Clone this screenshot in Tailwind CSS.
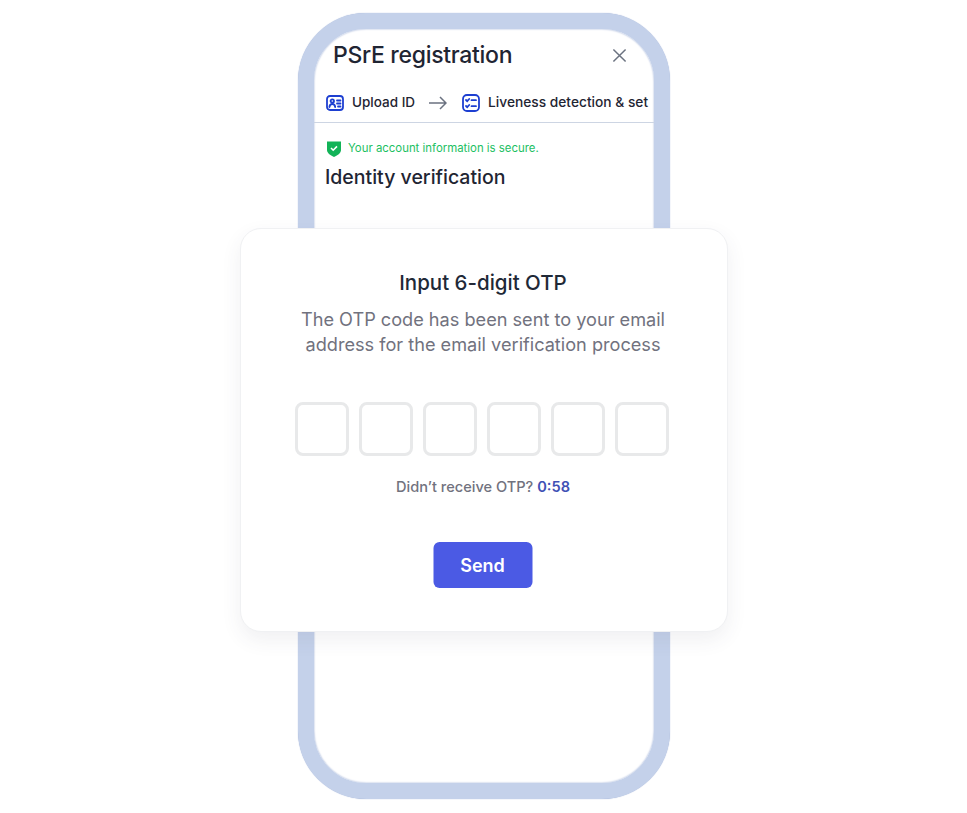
<!DOCTYPE html>
<html lang="en">
<head>
    <meta charset="UTF-8">
    <meta name="viewport" content="width=device-width, initial-scale=1.0">
    <title>Input OTP</title>
    <script src="https://cdn.jsdelivr.net/npm/@tailwindcss/browser@4"></script>
</head>
<body class="bg-white font-['Inter',sans-serif] overflow-hidden">
    <div class="relative w-[967px] h-[813px] pt-[13px]">
        <!-- phone frame -->
        <div class="ml-[298px] w-[372px] h-[786px] box-border border-[16px] border-[#c4d1ea] rounded-[68px] bg-white overflow-hidden shadow-[0_0_1px_#93a6d0,inset_0_0_2px_#93a6d0]">
            <div class="flex items-center justify-between pl-[19px] pr-[27px] pt-[8px] h-[44px]">
                <h2 class="text-[23px] leading-[34px] font-medium tracking-[-0.3px] text-[#1f2533]">PSrE registration</h2>
                <svg width="15" height="15" viewBox="0 0 16 16" fill="none" stroke="#6b7280" stroke-width="1.6"><path d="M1.5 1.5l13 13M14.5 1.5l-13 13"/></svg>
            </div>
            <div class="flex items-center h-[50px] pt-[10px] pl-[12px] border-b border-[#cdd5e3] whitespace-nowrap overflow-hidden">
                <svg class="shrink-0" width="18" height="18" viewBox="0 0 18 18" fill="none" stroke="#1d3fd1" stroke-width="1.8"><rect x="1" y="2" width="16" height="14" rx="3"/><circle cx="6.3" cy="7" r="1.7"/><path d="M3.4 13c.3-2 1.4-3 2.9-3s2.6 1 2.9 3M11 6.5h3.5M11 9.5h3.5M12 12.5h2.5" stroke-linecap="round"/></svg>
                <span class="ml-[8px] w-[62px] text-[13.5px] font-medium text-[#1f2533]">Upload ID</span>
                <svg class="shrink-0 ml-[15px]" width="18" height="14" viewBox="0 0 18 14" fill="none" stroke="#6b7280" stroke-width="1.5"><path d="M0 7h17M11 1l6 6-6 6"/></svg>
                <svg class="shrink-0 ml-[15px]" width="18" height="18" viewBox="0 0 18 18" fill="none" stroke="#1d3fd1" stroke-width="1.8" stroke-linecap="round"><rect x="1" y="1" width="16" height="16" rx="4"/><path d="M4 6l1.2 1.2L7.2 5M4 12l1.2 1.2L7.2 11M9.5 6.2h4.5M9.5 12.2h4.5"/></svg>
                <span class="ml-[8px] text-[13.75px] font-medium text-[#1f2533]">Liveness detection &amp; set</span>
            </div>
            <div class="flex items-center h-[17px] mt-[17px] pl-[13px]">
                <svg width="14" height="17" viewBox="0 0 14 17"><path d="M0 1.5h14v8.5c0 3-3 5-7 7-4-2-7-4-7-7z" fill="#12b358"/><path d="M4 8l2.2 2.2L10 6.4" fill="none" stroke="#fff" stroke-width="1.6"/></svg>
                <span class="ml-[7px] text-[11.4px] text-[#1cc062]">Your account information is secure.</span>
            </div>
            <h3 class="pl-[11px] mt-[5px] text-[19.5px] leading-[30px] font-medium text-[#1f2533]">Identity verification</h3>
        </div>
        <!-- otp dialog over the phone -->
        <div class="absolute left-[240px] top-[228px] w-[488px] h-[404px] pr-[2px] bg-white rounded-[21px] border border-[#f0f1f3] shadow-[0_8px_20px_rgba(60,70,90,0.08)] flex flex-col items-center">
            <h1 class="mt-[39px] text-[20.5px] leading-[30px] font-medium text-[#1f2937]">Input 6-digit OTP</h1>
            <p class="mt-[9px] text-[18.15px] leading-[25px] text-center text-[#71727e]">The OTP code has been sent to your email<br>address for the email verification process</p>
            <div class="flex gap-[10px] mt-[45px] -translate-x-[1px]">
                <div class="w-[54px] h-[54px] border-[3px] border-[#e8e9ea] rounded-[8px]"></div>
                <div class="w-[54px] h-[54px] border-[3px] border-[#e8e9ea] rounded-[8px]"></div>
                <div class="w-[54px] h-[54px] border-[3px] border-[#e8e9ea] rounded-[8px]"></div>
                <div class="w-[54px] h-[54px] border-[3px] border-[#e8e9ea] rounded-[8px]"></div>
                <div class="w-[54px] h-[54px] border-[3px] border-[#e8e9ea] rounded-[8px]"></div>
                <div class="w-[54px] h-[54px] border-[3px] border-[#e8e9ea] rounded-[8px]"></div>
            </div>
            <p class="mt-[20px] text-[14.6px] leading-[22px] font-medium text-[#71727e]">Didn’t receive OTP? <span class="font-semibold text-[#3f51b5]">0:58</span></p>
            <button class="mt-[44px] w-[99px] h-[46px] rounded-[6px] bg-[#4b5ae4] text-white text-[18px] font-semibold -translate-x-[0.5px]">Send</button>
        </div>
    </div>
</body>
</html>
